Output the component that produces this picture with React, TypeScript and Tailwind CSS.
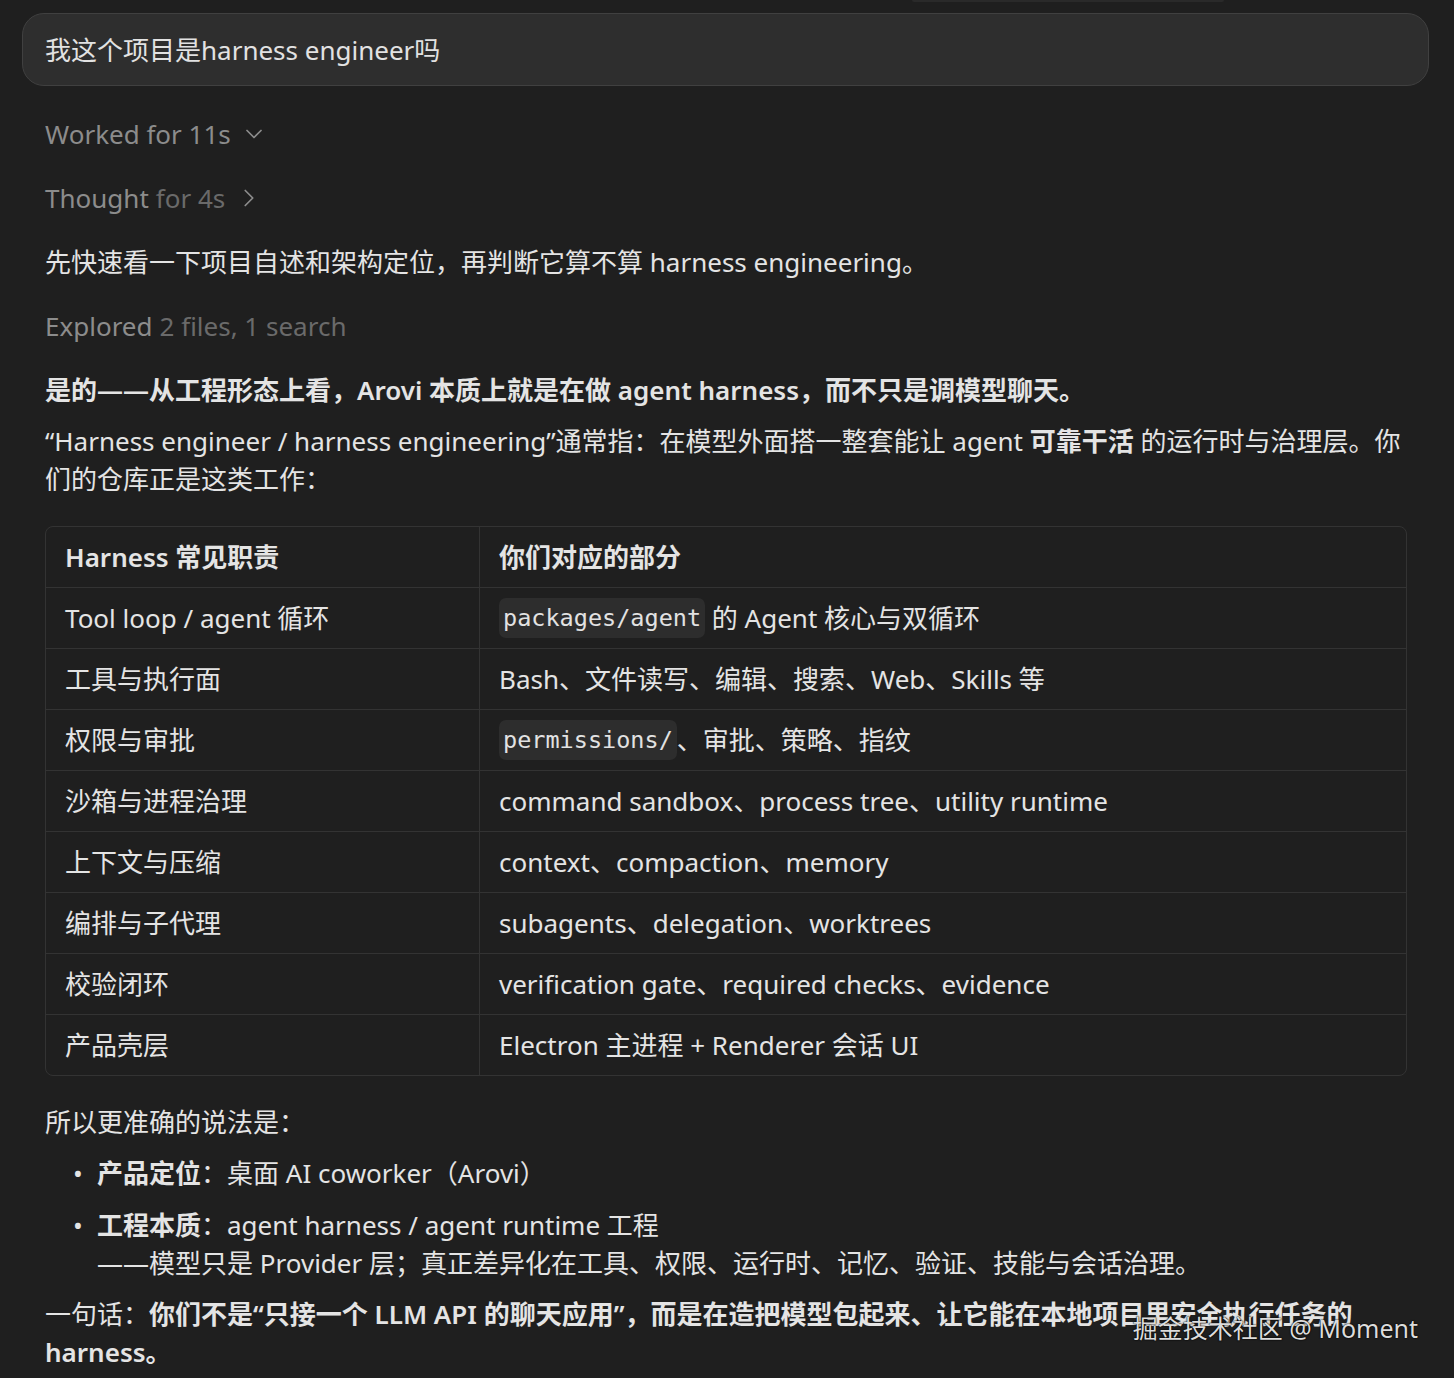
import { ChevronDown, ChevronRight } from "lucide-react";
import type { ReactNode } from "react";

interface Row {
  duty: string;
  part: ReactNode;
}

function Code({ children }: { children: ReactNode }) {
  return (
    <code className="rounded-[7px] bg-[#2d2d2d] px-[4px] py-[1px] font-['DejaVu_Sans_Mono',monospace] text-[23.5px] text-[#e2e2e2]">
      {children}
    </code>
  );
}

const rows: Row[] = [
  {
    duty: "Tool loop / agent 循环",
    part: (
      <>
        <Code>packages/agent</Code> 的 Agent 核心与双循环
      </>
    ),
  },
  { duty: "工具与执行面", part: "Bash、文件读写、编辑、搜索、Web、Skills 等" },
  {
    duty: "权限与审批",
    part: (
      <>
        <Code>permissions/</Code>、审批、策略、指纹
      </>
    ),
  },
  { duty: "沙箱与进程治理", part: "command sandbox、process tree、utility runtime" },
  { duty: "上下文与压缩", part: "context、compaction、memory" },
  { duty: "编排与子代理", part: "subagents、delegation、worktrees" },
  { duty: "校验闭环", part: "verification gate、required checks、evidence" },
  { duty: "产品壳层", part: "Electron 主进程 + Renderer 会话 UI" },
];

function DutyTable() {
  return (
    <div className="overflow-hidden rounded-lg border border-[#333333]">
      <div className="grid h-[60px] grid-cols-[434px_1fr] font-semibold">
        <div className="flex items-center border-r border-[#333333] px-[19px]">Harness 常见职责</div>
        <div className="flex items-center px-[19px]">你们对应的部分</div>
      </div>
      {rows.map((r) => (
        <div key={r.duty} className="grid h-[61px] grid-cols-[434px_1fr] border-t border-[#333333]">
          <div className="flex items-center border-r border-[#333333] px-[19px]">{r.duty}</div>
          <div className="flex items-center whitespace-pre px-[19px]">{r.part}</div>
        </div>
      ))}
    </div>
  );
}

export default function App() {
  return (
    <div className="relative h-[1378px] overflow-hidden bg-[#1f1f1f] font-['Noto_Sans','Noto_Sans_CJK_SC',sans-serif] text-[26px] leading-[38px] text-[#e4e4e4]">
      {/* edge of the card above, scrolled mostly out of view */}
      <div className="ml-[912px] h-[2px] w-[312px] rounded-b bg-[#2a2a2a]" />

      <div className="mt-[11px] pl-[22px] pr-[25px]">
        <div className="flex h-[73px] items-center rounded-[22px] border border-[#404040] bg-[#2e2e2e] px-[22px] text-[#e2e2e2]">
          我这个项目是harness engineer吗
        </div>
      </div>

      <div className="ml-[45px] mr-[47px] mt-[29px] flex flex-col">
        <div className="flex flex-col gap-[26px]">
          <div className="flex items-center text-[#8c8c8c]">
            Worked for 11s
            <ChevronDown size={28} strokeWidth={1.5} className="ml-[9px] text-[#8c8c8c]" />
          </div>
          <div className="flex items-center">
            <span className="text-[#8c8c8c]">Thought</span>
            <span className="ml-[7px] text-[#6a6a6a]">for 4s</span>
            <ChevronRight size={30} strokeWidth={1.4} className="ml-[9px] text-[#8c8c8c]" />
          </div>
          <p>先快速看一下项目自述和架构定位，再判断它算不算 harness engineering。</p>
          <div>
            <span className="text-[#8c8c8c]">Explored</span>
            <span className="ml-[7px] text-[#6a6a6a]">2 files, 1 search</span>
          </div>
          <p className="font-semibold">
            是的——从工程形态上看，Arovi 本质上就是在做 agent harness，而不只是调模型聊天。
          </p>
        </div>

        <p className="mt-[13px]">
          “Harness engineer / harness engineering”通常指：在模型外面搭一整套能让 agent{" "}
          <strong className="font-semibold">可靠干活</strong> 的运行时与治理层。你们的仓库正是这类工作：
        </p>

        <div className="mt-[28px]">
          <DutyTable />
        </div>

        <p className="mt-[27px]">所以更准确的说法是：</p>

        <ul className="mt-[13px] flex flex-col gap-[14px]">
          <li className="flex">
            <span className="w-[52px] shrink-0 pl-[28px]">•</span>
            <span>
              <strong className="font-semibold">产品定位</strong>：桌面 AI coworker（Arovi）
            </span>
          </li>
          <li className="flex">
            <span className="w-[52px] shrink-0 pl-[28px]">•</span>
            <span>
              <strong className="font-semibold">工程本质</strong>：agent harness / agent runtime 工程
              <br />
              ——模型只是 Provider 层；真正差异化在工具、权限、运行时、记忆、验证、技能与会话治理。
            </span>
          </li>
        </ul>

        <p className="mt-[13px] pr-[40px]">
          一句话：
          <strong className="font-semibold">
            你们不是“只接一个 LLM API 的聊天应用”，而是在造把模型包起来、让它能在本地项目里安全执行任务的 harness。
          </strong>
        </p>
      </div>

      <div className="absolute right-[36px] top-[1309px] text-[25px] text-[#dcdcdc] [text-shadow:0_0_2px_#000,0_0_1px_#000]">
        掘金技术社区 @ Moment
      </div>
    </div>
  );
}
